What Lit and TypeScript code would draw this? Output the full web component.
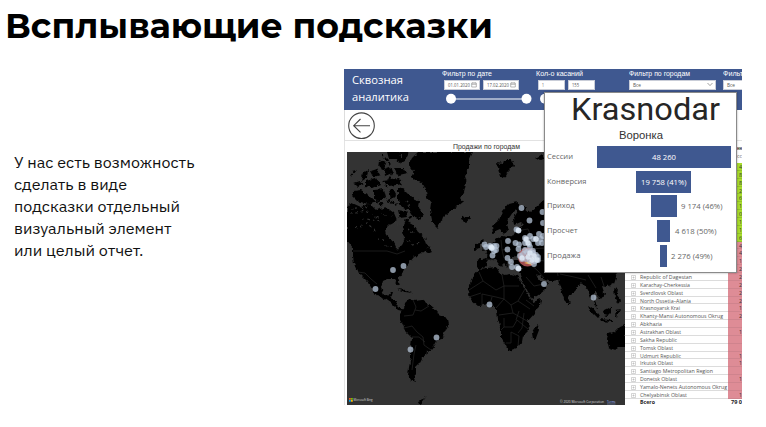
import { LitElement, html, css, svg } from "lit";
import { customElement } from "lit/decorators.js";

/** Single line of text set to an exact width. */
const line = (text: string, width: number, height: number, baseline: number, cls = "") => html`
  <svg class="line ${cls}" width=${width} height=${height}>
    <text x="0" y=${baseline} textLength=${width} lengthAdjust="spacingAndGlyphs">${text}</text>
  </svg>`;

const lineBase = css`
  :host { display: block; }
  .line { display: block; overflow: visible; flex: none; fill: currentColor; }
`;

const LAND = [
  // North and Central America
  "M347 206L352 203L361 207L370 203L377 210L386 207L394 213L397 220L390 224L385 229L386 235L393 240L396 247L400 249L403 242L404 236L402 228L406 220L413 224L418 232L425 238L428 247L422 253L414 257L409 263L405 268L402 273L398 278L400 285L397 283L394 279L387 279L383 281L381 288L384 295L388 296L391 292L393 292L391 298L393 300L397 300L396 304L400 308L404 309L403 311L398 310L391 303L385 299L378 297L372 289L368 282L361 275L357 271L354 264L353 255L353 248L347 240Z",
  // Greenland
  "M418 152L473 152L469 161L469 169L464 176L466 183L464 192L460 198L463 202L456 208L447 213L442 218L440 224L438 229L435 226L432 220L430 210L431 203L427 198L426 190L422 182L415 180L411 176L414 171L409 164L412 158Z",
  // Canadian Arctic islands
  "M387 152L409 152L405 160L399 163L396 159L389 159Z",
  "M379 160L386 163L384 170L378 167ZM371 171L377 169L380 175L374 177ZM363 173L368 170L367 177L361 181Z",
  "M354 183L360 181L364 184L358 187ZM366 181L376 178L380 185L373 188L366 186Z",
  "M384 169L390 167L392 173L385 176ZM394 168L404 168L408 174L399 176ZM382 181L399 179L403 184L389 186Z",
  "M353 191L361 190L370 196L375 201L368 204L357 201L352 196Z",
  "M374 190L384 189L386 197L379 202L374 198ZM389 190L393 189L396 195L391 200Z",
  "M398 188L405 190L412 197L419 202L418 208L424 214L420 219L414 217L410 211L403 208L398 200Z",
  "M398 210L405 211L407 217L400 218ZM425 249L429 247L432 251L427 253Z",
  // South America
  "M405 303L409 299L414 301L422 300L428 304L433 308L437 313L442 315L448 319L449 324L445 330L443 337L437 341L435 345L431 350L427 351L426 356L422 358L419 364L416 367L416 373L414 377L416 382L411 380L408 375L409 367L411 358L411 347L412 338L405 331L403 325L400 319L400 314L404 309Z",
  // Africa
  "M475 274L479 269L487 268L496 267L499 273L505 275L511 274L518 276L524 287L530 298L533 302L541 299L540 305L534 314L528 321L529 330L523 336L522 342L517 348L508 351L506 346L501 338L501 328L498 319L497 311L494 306L488 304L478 306L472 301L468 295L469 286Z",
  "M538 325L539 330L536 338L533 339L532 333L535 328Z",
  // Europe and Asia
  "M477 260L486 258L487 251L484 248L491 244L496 240L502 236L508 237L514 235L518 228L524 225L521 222L514 225L513 219L518 211L515 209L509 218L507 225L509 229L504 235L500 230L493 233L492 226L499 220L502 212L509 204L517 202L525 208L530 212L536 207L545 199L552 194L625 194L625 268L617 274L614 283L606 287L602 286L605 295L601 300L597 296L594 291L594 301L599 308L597 308L591 298L587 289L582 282L576 289L570 295L568 303L565 302L562 293L558 280L552 281L544 278L536 274L541 281L547 282L546 289L540 294L532 299L527 290L521 278L519 272L523 268L516 268L510 265L512 260L520 260L527 258L526 255L518 251L515 256L507 259L508 267L505 263L499 257L505 263L501 267L495 259L489 261L485 267L479 269L477 267Z",
  // Islands
  "M482 239L486 243L488 249L482 251L483 246L480 242ZM475 244L480 243L480 249L475 250Z",
  "M462 217L469 216L471 219L466 223L461 220Z",
  "M497 163L502 164L503 160L512 160L514 165L508 171L504 179L500 176Z",
  "M535 158L541 155L545 159L540 161Z",
  "M588 305L594 309L600 317L597 318L591 312ZM600 319L612 320L612 322L601 321ZM603 311L609 308L612 306L612 312L608 316L604 315ZM616 310L621 309L618 314L617 318L615 315Z",
  "M614 288L618 289L617 295L621 300L619 304L615 297ZM568 301L571 304L569 306Z",
  "M608 334L616 331L620 327L625 325L625 347L617 347L611 351L609 348L607 340Z",
  "M418 401L425 398L427 396L420 405ZM397 289L406 290L413 293L405 292Z",
];

const BORDERS = [
  "M353 251H387L397 254L405 251M358 272L365 273L371 279L377 284",
  "M413 300L416 307L413 315L404 316M429 306L421 311L415 310M404 328L412 326L417 332L423 337L424 345L431 350M412 337L419 337L425 342M416 345L414 354L412 370",
  "M479 272L483 281L469 290M483 281L496 290L504 286L502 275M504 286L519 286M504 286V299L496 297L482 294V305M469 297L481 293M490 304L492 297M496 308L504 299L511 305L518 301L530 309M511 305L513 313L499 315M518 301L525 289M513 313L527 321M504 318V327L501 330M504 327L513 327L517 320L528 329M506 343L511 343V332L519 336L518 346M519 311L516 320M524 313L522 328L518 333M526 300L534 306",
  "M486 259L496 260M492 244L495 250L494 258M501 240L502 250L509 249M509 239L515 244L518 251M502 250L504 258M516 231L528 229L533 241L540 244M530 249L545 248M529 263L538 271L544 278M526 277L534 286L544 284M535 260L556 262L558 276M560 274L574 277L586 280M588 275L596 288M601 277L604 286",
];

const PINS: number[][] = [
  [393, 270], [403.5, 266], [375.5, 289], [489.5, 304.5], [544, 284], [593.5, 297.5], [436.5, 337.5], [410.5, 349.5],
  [521.5, 208], [542.5, 212], [529.5, 220.5], [543, 223], [516.5, 229.5], [518.5, 230.5],
  [484.5, 244.5], [486, 247], [490, 246], [491.5, 248], [494, 246], [496.5, 246], [494, 251], [492.5, 255.5], [496, 250],
  [508, 241], [507.5, 249.5], [515.5, 243], [519, 244.5], [518.5, 249], [507.5, 258], [511, 262], [512, 267], [518.5, 268.5], [517, 267],
  [525, 238], [527, 240], [530, 236], [525, 243], [529, 244], [533, 239], [536, 239], [539, 234], [541, 239], [538, 243], [543, 236], [542, 243], [530, 247], [525, 250],
  [520, 256], [523, 254], [527, 252], [530, 252], [533, 253], [536, 255], [538, 260], [534, 264], [530, 261], [526, 259], [529, 256], [533, 258], [522, 259], [535, 261], [533, 251], [538, 257],
];
const BRIGHT: number[][] = [
  [518.5, 230.5], [491, 247], [492, 248], [526, 239], [536, 239], [528, 243], [522, 258], [530, 253], [528, 257], [532, 260], [537, 260], [534, 256], [518.5, 268.5],
];

@customElement("sales-map")
class SalesMap extends LitElement {
  static styles = css`
    :host { display: block; height: 253px; }
    svg { display: block; }
    .credit { font: 4px "Open Sans", sans-serif; fill: #ddd; }
    .terms { fill: #9bb8ff; text-decoration: underline; }
  `;
  render() {
    return html`<svg width="278" height="253" viewBox="347 152 278 253">
      <defs>
        <filter id="coast" x="-5%" y="-5%" width="110%" height="110%">
          <feTurbulence type="fractalNoise" baseFrequency="0.22" numOctaves="2" seed="4" />
          <feDisplacementMap in="SourceGraphic" scale="5" xChannelSelector="R" yChannelSelector="G" />
        </filter>
      </defs>
      <rect x="347" y="152" width="278" height="253" fill="#333" />
      <g filter="url(#coast)">
        ${LAND.map((d) => svg`<path d=${d} fill="#000" />`)}
        <path d="M351 214L365 211L379 219M356 228L367 223L375 231M362 219L383 221M378 238L388 242M404 238L412 245L420 243M351 209L372 206M380 214L394 216M408 229L416 236M399 151L402 157M406 201L413 209M385 246L398 249" fill="none" stroke="#333" stroke-width="1.2" stroke-dasharray="1.5 3 2.5 4" />
        <path d="M351 176L357 168M382 155L390 164M387 199L395 205L402 203M371 199L383 205M392 173L386 187M406 221L414 214" fill="none" stroke="#000" stroke-width="2" stroke-dasharray="2.5 1.5 4 2" />
        <path d="M386 228L395 223L402 226L403 234L404 240L400 247L395 244L387 235Z" fill="#333" />
      </g>
      ${BORDERS.map((d) => svg`<path d=${d} fill="none" stroke="#262626" stroke-width=".7" />`)}
      <circle cx="527.5" cy="257" r="9.5" fill="#c75f62" opacity=".8" />
      <path d="M524 263L532 265L530 261Z" fill="#e9b65b" />
      ${PINS.map(([x, y]) => svg`<circle cx=${x} cy=${y} r="2.9" fill="#b7c5d8" fill-opacity=".75" />`)}
      ${BRIGHT.map(([x, y]) => svg`<circle cx=${x} cy=${y} r="2.7" fill="#e3edf8" fill-opacity=".75" />`)}
      <path d="M349 398h1.8v1.8h-1.8z" fill="#e8602c" /><path d="M351 398h1.8v1.8h-1.8z" fill="#7fba00" />
      <path d="M349 400h1.8v1.8h-1.8z" fill="#00a4ef" /><path d="M351 400h1.8v1.8h-1.8z" fill="#ffb900" />
      <text class="credit" x="353.5" y="401.3" textLength="19" lengthAdjust="spacingAndGlyphs">Microsoft Bing</text>
      <text class="credit" x="560" y="402.8" textLength="44" lengthAdjust="spacingAndGlyphs">© 2020 Microsoft Corporation</text>
      <text class="credit terms" x="607" y="402.8" textLength="8.5" lengthAdjust="spacingAndGlyphs">Terms</text>
    </svg>`;
  }
}

@customElement("filter-bar")
class FilterBar extends LitElement {
  static styles = [lineBase, css`
    :host { height: 41px; background: #3f5890; color: #fff; display: flex; overflow: hidden; box-sizing: border-box; }
    .brand { width: 97.5px; flex: none; padding: 5px 0 0 8px; box-sizing: border-box; font: 11px "Open Sans", sans-serif; }
    .group { flex: none; font: 7px "Liberation Sans", sans-serif; }
    .dates { width: 94px; }
    .touches { width: 93px; }
    .cities { width: 94px; }
    .row { display: flex; gap: 3px; margin: 2.5px 0 0 2px; }
    .field { height: 10px; flex: none; background: #fff; box-sizing: border-box; border: .5px solid #c9cdd8; color: #555; font: 5px "Open Sans", sans-serif; display: flex; align-items: center; justify-content: space-between; padding: 0 2px 0 3px; }
    .date { width: 36px; }
    .num { width: 27px; }
    .select { width: 87px; }
    .tail { margin-left: 0; }
    .slider { display: block; margin-top: 2px; overflow: visible; }
  `];
  private cal = html`<svg width="6" height="6" viewBox="0 0 6 6" fill="none" stroke="#888" stroke-width=".6"><path d="M.7 1h4.6v4H.7zM.7 2.3h4.6M1.8 .3v1M4.2 .3v1" /></svg>`;
  private chevron = html`<svg width="6" height="5" viewBox="0 0 6 5" fill="none" stroke="#777" stroke-width=".7"><path d="M.5 1l2.5 2.6L5.5 1" /></svg>`;
  render() {
    return html`
      <div class="brand">${line("Сквозная", 51, 16, 10)}${line("аналитика", 57, 16, 10.5)}</div>
      <div class="group dates">
        ${line("Фильтр по дате", 50, 8, 6.8)}
        <div class="row">
          <div class="field date">${line("01.01.2020", 22, 6, 4.8)}${this.cal}</div>
          <div class="field date">${line("17.02.2020", 22, 6, 4.8)}${this.cal}</div>
        </div>
        <svg class="slider" width="94" height="14"><path d="M9 7H84" stroke="#fff" stroke-width="1.2" /><circle cx="9" cy="6.8" r="5" fill="#fff" /><circle cx="84.5" cy="6.8" r="5" fill="#fff" /></svg>
      </div>
      <div class="group touches">
        ${line("Кол-о касаний", 47, 8, 6.8)}
        <div class="row">
          <div class="field num">${line("1", 2, 6, 4.8)}</div>
          <div class="field num">${line("155", 7, 6, 4.8)}</div>
        </div>
        <svg class="slider" width="94" height="14"><path d="M9 7H50" stroke="#fff" stroke-width="1.2" /><circle cx="9" cy="6.8" r="5" fill="#fff" /></svg>
      </div>
      <div class="group cities">
        ${line("Фильтр по городам", 61, 8, 6.8)}
        <div class="row tail"><div class="field select">${line("Все", 8, 6, 5)}${this.chevron}</div></div>
      </div>
      <div class="group">
        ${line("Фильтр", 24, 8, 6.8)}
        <div class="row tail"><div class="field select">${line("Все", 8, 6, 5)}</div></div>
      </div>`;
  }
}

type Region = [name: string, width: number, value: string];
const REGIONS: Region[] = [
  ["Republic of Dagestan", 52, "2"], ["Karachay-Cherkessia", 50, "2"], ["Sverdlovsk Oblast", 43, "2"],
  ["North Ossetia–Alania", 51, "2"], ["Krasnoyarsk Krai", 40, "1"], ["Khanty-Mansi Autonomous Okrug", 83, "2"],
  ["Abkhazia", 22, ""], ["Astrakhan Oblast", 41, "1"], ["Sakha Republic", 37, ""], ["Tomsk Oblast", 33, ""],
  ["Udmurt Republic", 41, "1"], ["Irkutsk Oblast", 33, "1"], ["Santiago Metropolitan Region", 73, ""],
  ["Donetsk Oblast", 37, "1"], ["Yamalo-Nenets Autonomous Okrug", 87, ""], ["Chelyabinsk Oblast", 47, "1"],
];
const TOP_VALUES = ["4", "8", "8", "2", "6", "1", "0", "1", "1", "6", "4", "4", "1", "2"];

@customElement("region-table")
class RegionTable extends LitElement {
  static styles = [lineBase, css`
    :host { width: 117px; flex: none; background: #fff; overflow: hidden; font: 5.7px "Open Sans", sans-serif; color: #555; }
    .head { height: 22px; padding: 3px 0 0 112px; box-sizing: border-box; }
    .head .line { margin-bottom: 1px; }
    .strong { font-weight: 700; color: #222; }
    .plain { font-weight: 400; color: #666; }
    .row { display: flex; height: 7.87px; box-sizing: border-box; border-bottom: .5px solid #dcdcdc; }
    .toggle { width: 15px; padding: 1.8px 0 0 6px; box-sizing: border-box; flex: none; }
    .toggle svg { display: block; }
    .name { width: 88px; flex: none; }
    .value { width: 14px; height: 7.87px; flex: none; background: #de8c96; padding-left: 11px; box-sizing: border-box; color: #333; border-bottom: .5px solid #cf838d; }
    .good { background: #a8dc2c; border-color: #92c02a; }
    .total { display: flex; padding-left: 15px; color: #222; font-weight: 700; }
    .total .name { width: 91px; }
  `];
  render() {
    return html`
      <div class="head strong">${line("нн", 5, 8, 6)}<div class="plain">${line("сс", 5, 8, 5)}</div></div>
      ${TOP_VALUES.map((v, i) => html`<div class="row"><div class="toggle"></div><div class="name"></div><div class="value ${i < 10 ? "good" : ""}">${line(v, 3, 7, 6)}</div></div>`)}
      ${REGIONS.map(([name, width, value]) => html`<div class="row">
        <div class="toggle"><svg width="5" height="5" viewBox="0 0 5 5" fill="none" stroke="#aaa" stroke-width=".5"><path d="M.5 .5h4v4h-4zM1.4 2.5h2.2M2.5 1.4v2.2" /></svg></div>
        <div class="name">${line(name, width, 7, 5.9)}</div>
        <div class="value">${value ? line(value, 3, 7, 5.9) : ""}</div>
      </div>`)}
      <div class="total"><div class="name">${line("Всего", 15, 7, 5)}</div>${line("79 0", 11, 7, 5)}</div>`;
  }
}

interface Stage { name: string; nameWidth: number; bar: number; text: string; textWidth: number; inside: boolean }
const STAGES: Stage[] = [
  { name: "Сессии", nameWidth: 26, bar: 134, text: "48 260", textWidth: 24, inside: true },
  { name: "Конверсия", nameWidth: 39.5, bar: 55, text: "19 758 (41%)", textWidth: 45.5, inside: true },
  { name: "Приход", nameWidth: 27.5, bar: 26, text: "9 174 (46%)", textWidth: 41.5, inside: false },
  { name: "Просчет", nameWidth: 30.5, bar: 13, text: "4 618 (50%)", textWidth: 41.5, inside: false },
  { name: "Продажа", nameWidth: 33.5, bar: 6.5, text: "2 276 (49%)", textWidth: 41.5, inside: false },
];

@customElement("city-tooltip")
class CityTooltip extends LitElement {
  static styles = [lineBase, css`
    :host { width: 193px; height: 181px; box-sizing: border-box; background: #fff; border: 1px solid #8a8a8a; box-shadow: 0 0 2px rgba(0, 0, 0, .35); }
    .city { padding-left: 26px; color: #262626; font: 400 30.5px Roboto, sans-serif; }
    .title { padding-left: 73.5px; color: #333; font: 11px "Liberation Sans", sans-serif; }
    .stage { display: flex; align-items: center; height: 24.7px; font: 7.8px "Open Sans", sans-serif; }
    .label { width: 51.5px; padding-left: 2px; box-sizing: border-box; color: #666; flex: none; }
    .track { width: 134px; display: grid; grid-template-columns: 1fr auto 1fr; align-items: center; flex: none; }
    .bar { grid-column: 2; height: 22px; background: #3f5890; color: #fff; display: flex; align-items: center; justify-content: center; }
    .side { width: 0; padding-left: 4.5px; color: #666; }
    .bar .line { font-weight: 500; }
  `];
  render() {
    return html`
      <div class="city">${line("Krasnodar", 149, 29, 27)}</div>
      <div class="title">${line("Воронка", 44, 22.5, 16.8)}</div>
      ${STAGES.map((s) => html`<div class="stage">
        <div class="label">${line(s.name, s.nameWidth, 10, 7)}</div>
        <div class="track">
          <div class="bar" style="width:${s.bar}px">${s.inside ? line(s.text, s.textWidth, 10, 8) : ""}</div>
          ${s.inside ? "" : html`<div class="side">${line(s.text, s.textWidth, 10, 8)}</div>`}
        </div>
      </div>`)}`;
  }
}

@customElement("sales-report")
class SalesReport extends LitElement {
  static styles = [lineBase, css`
    :host { width: 398px; height: 336px; position: relative; background: #fff; overflow: hidden; }
    .back { height: 31px; padding: 2px 0 0 3px; box-sizing: border-box; border-left: 1px solid #ddd; border-bottom: 1px solid #e2e2e2; }
    .back svg { display: block; }
    .main { display: flex; height: 264px; }
    .map { width: 281px; padding-left: 2px; box-sizing: border-box; border-left: 1px solid #e4e4e4; flex: none; }
    .caption { height: 11px; display: flex; justify-content: center; color: #333; font: 7.2px "Liberation Sans", sans-serif; }
    .tip { position: absolute; left: 200px; top: 23px; }
  `];
  render() {
    return html`
      <filter-bar></filter-bar>
      <div class="back"><svg width="28" height="28" viewBox="0 0 28 28" fill="none" stroke="#444" stroke-width="1.1"><circle cx="13.5" cy="13.7" r="12.8" /><path d="M22 13.7H6M12.5 7L5.7 13.7L12.5 20.4" /></svg></div>
      <div class="main">
        <div class="map">
          <div class="caption">${line("Продажи по городам", 67, 10, 8)}</div>
          <sales-map></sales-map>
        </div>
        <region-table></region-table>
      </div>
      <city-tooltip class="tip"></city-tooltip>`;
  }
}

@customElement("app-root")
class AppRoot extends LitElement {
  static styles = [lineBase, css`
    :host { height: 427px; background: #fff; color: #000; overflow: hidden; }
    .title { height: 69px; padding: 0 0 0 5px; margin: 0; box-sizing: border-box; font: 700 34px Montserrat, Inter, sans-serif; }
    .slide { display: flex; align-items: flex-start; }
    .note { width: 344px; padding: 83px 0 0 14px; box-sizing: border-box; flex: none; color: #111; font: 15.6px "IBM Plex Sans", "Noto Sans", sans-serif; }
  `];
  render() {
    return html`
      <h1 class="title">${line("Всплывающие подсказки", 488, 50, 38)}</h1>
      <div class="slide">
        <div class="note">
          ${line("У нас есть возможность", 180.5, 22, 16)}
          ${line("сделать в виде", 113, 22, 16)}
          ${line("подсказки отдельный", 166, 22, 16)}
          ${line("визуальный элемент", 157.5, 22, 16)}
          ${line("или целый отчет.", 129.5, 22, 16)}
        </div>
        <sales-report></sales-report>
      </div>`;
  }
}
